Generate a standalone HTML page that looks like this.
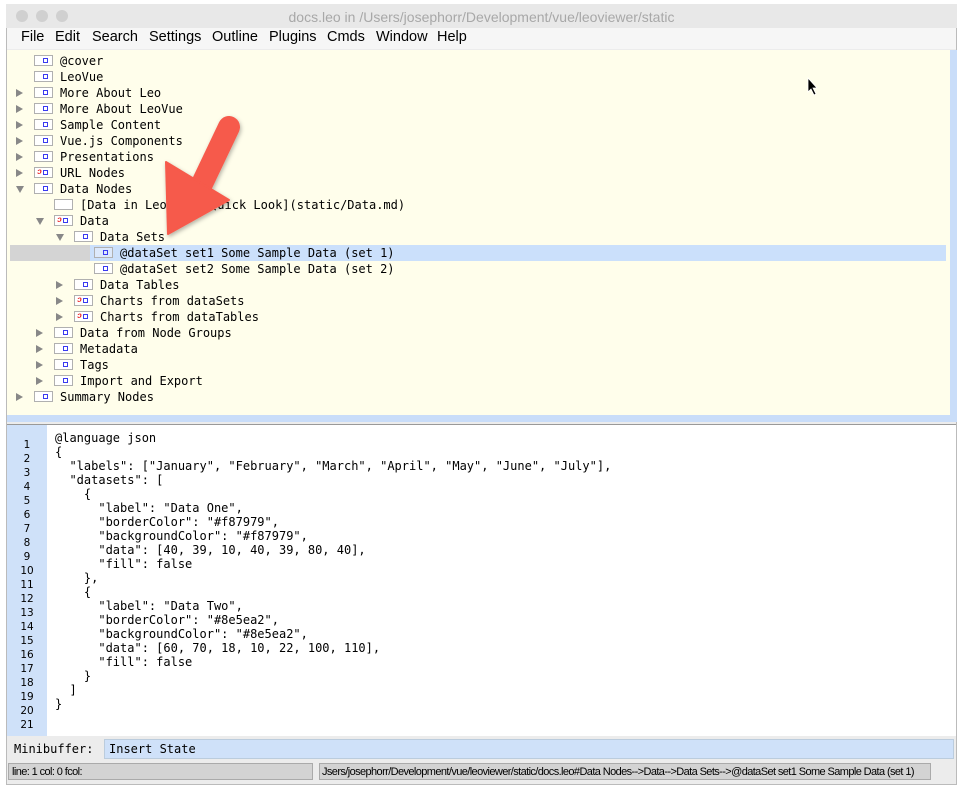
<!DOCTYPE html>
<html><head><meta charset="utf-8"><style>
*{margin:0;padding:0;box-sizing:border-box}
body{width:963px;height:789px;background:#fff;position:relative;overflow:hidden;font-family:"Liberation Sans",sans-serif}
.win{position:absolute;left:6px;top:4px;width:951px;height:781px;border:1px solid #bbb;background:#ececec}
.title{position:absolute;left:6px;top:4px;width:951px;height:24px;background:#e8e8e8;text-align:center;font-size:14px;color:#a8a8a8;line-height:26px}
.dot{position:absolute;top:10px;width:12px;height:12px;border-radius:50%;background:#d0d0d0}
.menu{position:absolute;left:7px;top:28px;width:949px;height:21px;background:#f6f6f6;font-size:14.5px;color:#000}
.menu span{position:absolute;top:1px}
.tree{position:absolute;left:7px;top:50px;width:943px;height:365px;background:#fffeeb}
.rb{position:absolute;left:950px;top:50px;width:7px;height:372px;background:#c9ddf9}
.bb{position:absolute;left:7px;top:415px;width:943px;height:7px;background:#c9ddf9}
.mono{font-family:"DejaVu Sans Mono","Liberation Mono",monospace;font-size:12px;color:#000}
.row{position:absolute;height:16px;line-height:16px;white-space:pre}
.ic{position:absolute;width:19px;height:11px;background:#fff;border:1px solid #b0b0b0;margin-top:-1px}
.ic i{position:absolute;right:4px;top:2px;width:5px;height:5px;border:1px solid #3a3af0}
.ic b{position:absolute;left:2px;top:0px;font-size:8px;line-height:8px;color:#e22;font-weight:bold;font-style:italic}
.tri{position:absolute;width:0;height:0}
.tr{border-top:4px solid transparent;border-bottom:4px solid transparent;border-left:7px solid #888}
.td{border-left:4px solid transparent;border-right:4px solid transparent;border-top:7px solid #888}
.ed{position:absolute;left:7px;top:424px;width:949px;height:312px;background:#fff;border-top:1px solid #999}
.gut{position:absolute;left:7px;top:425px;width:40px;height:311px;background:#cfe1f9}
.ln{position:absolute;left:7px;width:40px;text-align:center;font-size:10.5px;font-family:"DejaVu Sans",sans-serif;color:#000}
.code{position:absolute;left:55px;top:431px;line-height:14px;white-space:pre}
</style></head><body>
<div class="win"></div>
<div class="title">docs.leo in /Users/josephorr/Development/vue/leoviewer/static</div>
<div class="dot" style="left:16px"></div><div class="dot" style="left:36px"></div><div class="dot" style="left:56px"></div>
<div class="menu">
<span style="left:14px">File</span><span style="left:48px">Edit</span><span style="left:85px">Search</span><span style="left:142px">Settings</span><span style="left:205px">Outline</span><span style="left:262px">Plugins</span><span style="left:320px">Cmds</span><span style="left:369px">Window</span><span style="left:430px">Help</span>
</div>
<div class="tree"></div>
<div class="rb"></div><div class="bb"></div>
<div style="position:absolute;left:10px;top:245px;width:80px;height:16px;background:#d4d4d4"></div>
<div style="position:absolute;left:90px;top:245px;width:856px;height:16px;background:#cbe0fb"></div>
<div class="mono" id="t">
<div class="ic" style="left:34px;top:56px"><i></i></div><div class="row" style="left:60px;top:53px">@cover</div>
<div class="ic" style="left:34px;top:72px"><i></i></div><div class="row" style="left:60px;top:69px">LeoVue</div>
<div class="tri tr" style="left:16px;top:89px"></div><div class="ic" style="left:34px;top:88px"><i></i></div><div class="row" style="left:60px;top:85px">More About Leo</div>
<div class="tri tr" style="left:16px;top:105px"></div><div class="ic" style="left:34px;top:104px"><i></i></div><div class="row" style="left:60px;top:101px">More About LeoVue</div>
<div class="tri tr" style="left:16px;top:121px"></div><div class="ic" style="left:34px;top:120px"><i></i></div><div class="row" style="left:60px;top:117px">Sample Content</div>
<div class="tri tr" style="left:16px;top:137px"></div><div class="ic" style="left:34px;top:136px"><i></i></div><div class="row" style="left:60px;top:133px">Vue.js Components</div>
<div class="tri tr" style="left:16px;top:153px"></div><div class="ic" style="left:34px;top:152px"><i></i></div><div class="row" style="left:60px;top:149px">Presentations</div>
<div class="tri tr" style="left:16px;top:169px"></div><div class="ic" style="left:34px;top:168px"><b>ↄ</b><i></i></div><div class="row" style="left:60px;top:165px">URL Nodes</div>
<div class="tri td" style="left:16px;top:186px"></div><div class="ic" style="left:34px;top:184px"><i></i></div><div class="row" style="left:60px;top:181px">Data Nodes</div>
<div class="ic" style="left:54px;top:200px"></div><div class="row" style="left:80px;top:197px">[Data in LeoVue - Quick Look](static/Data.md)</div>
<div class="tri td" style="left:36px;top:218px"></div><div class="ic" style="left:54px;top:216px"><b>ↄ</b><i></i></div><div class="row" style="left:80px;top:213px">Data</div>
<div class="tri td" style="left:56px;top:234px"></div><div class="ic" style="left:74px;top:232px"><i></i></div><div class="row" style="left:100px;top:229px">Data Sets</div>
<div class="ic" style="left:94px;top:248px;background:#dde9fb"><i></i></div><div class="row" style="left:120px;top:245px">@dataSet set1 Some Sample Data (set 1)</div>
<div class="ic" style="left:94px;top:264px"><i></i></div><div class="row" style="left:120px;top:261px">@dataSet set2 Some Sample Data (set 2)</div>
<div class="tri tr" style="left:56px;top:281px"></div><div class="ic" style="left:74px;top:280px"><i></i></div><div class="row" style="left:100px;top:277px">Data Tables</div>
<div class="tri tr" style="left:56px;top:297px"></div><div class="ic" style="left:74px;top:296px"><b>ↄ</b><i></i></div><div class="row" style="left:100px;top:293px">Charts from dataSets</div>
<div class="tri tr" style="left:56px;top:313px"></div><div class="ic" style="left:74px;top:312px"><b>ↄ</b><i></i></div><div class="row" style="left:100px;top:309px">Charts from dataTables</div>
<div class="tri tr" style="left:36px;top:329px"></div><div class="ic" style="left:54px;top:328px"><i></i></div><div class="row" style="left:80px;top:325px">Data from Node Groups</div>
<div class="tri tr" style="left:36px;top:345px"></div><div class="ic" style="left:54px;top:344px"><i></i></div><div class="row" style="left:80px;top:341px">Metadata</div>
<div class="tri tr" style="left:36px;top:361px"></div><div class="ic" style="left:54px;top:360px"><i></i></div><div class="row" style="left:80px;top:357px">Tags</div>
<div class="tri tr" style="left:36px;top:377px"></div><div class="ic" style="left:54px;top:376px"><i></i></div><div class="row" style="left:80px;top:373px">Import and Export</div>
<div class="tri tr" style="left:16px;top:393px"></div><div class="ic" style="left:34px;top:392px"><i></i></div><div class="row" style="left:60px;top:389px">Summary Nodes</div>
</div>
<svg style="position:absolute;left:0;top:0" width="963" height="430">
<defs><filter id="s" x="-50%" y="-50%" width="200%" height="200%"><feDropShadow dx="1" dy="2" stdDeviation="2" flood-opacity="0.3"/></filter></defs>
<g filter="url(#s)" fill="#f65a4b" stroke="#f65a4b">
<line x1="229" y1="127" x2="200" y2="188" stroke-width="22" stroke-linecap="round"/>
<polygon points="166,162 229,200 168,234" stroke-width="2" stroke-linejoin="round"/>
</g>
<path d="M808 78 L808 92 L811 89 L814 95 L816 94 L813 88 L817 88 Z" fill="#000" stroke="#fff" stroke-width="0.8"/>
</svg>
<div class="ed"></div>
<div class="gut"></div>
<div class="mono code">@language json
{
  "labels": ["January", "February", "March", "April", "May", "June", "July"],
  "datasets": [
    {
      "label": "Data One",
      "borderColor": "#f87979",
      "backgroundColor": "#f87979",
      "data": [40, 39, 10, 40, 39, 80, 40],
      "fill": false
    },
    {
      "label": "Data Two",
      "borderColor": "#8e5ea2",
      "backgroundColor": "#8e5ea2",
      "data": [60, 70, 18, 10, 22, 100, 110],
      "fill": false
    }
  ]
}</div>
<div class="ln" style="top:438px;line-height:14px">1<br>2<br>3<br>4<br>5<br>6<br>7<br>8<br>9<br>10<br>11<br>12<br>13<br>14<br>15<br>16<br>17<br>18<br>19<br>20<br>21</div>
<div style="position:absolute;left:7px;top:737px;width:949px;height:25px;background:#ececec"></div>
<div class="mono" style="position:absolute;left:14px;top:741px;line-height:16px">Minibuffer:</div>
<div class="mono" style="position:absolute;left:104px;top:739px;width:850px;height:20px;background:#cfe1f9;border:1px solid #bcd;padding-left:4px;line-height:19px">Insert State</div>
<div style="position:absolute;left:8px;top:763px;width:305px;height:17px;background:#d3d3d3;border:1px solid #aaa;font-size:11px;line-height:16px;padding-left:3px;letter-spacing:-0.6px">line: 1 col: 0 fcol:</div>
<div style="position:absolute;left:319px;top:763px;width:612px;height:17px;background:#d3d3d3;border:1px solid #aaa;font-size:11px;line-height:16px;padding-left:2px;white-space:nowrap;overflow:hidden;letter-spacing:-0.6px">Jsers/josephorr/Development/vue/leoviewer/static/docs.leo#Data Nodes--&gt;Data--&gt;Data Sets--&gt;@dataSet set1 Some Sample Data (set 1)</div>
</body></html>
